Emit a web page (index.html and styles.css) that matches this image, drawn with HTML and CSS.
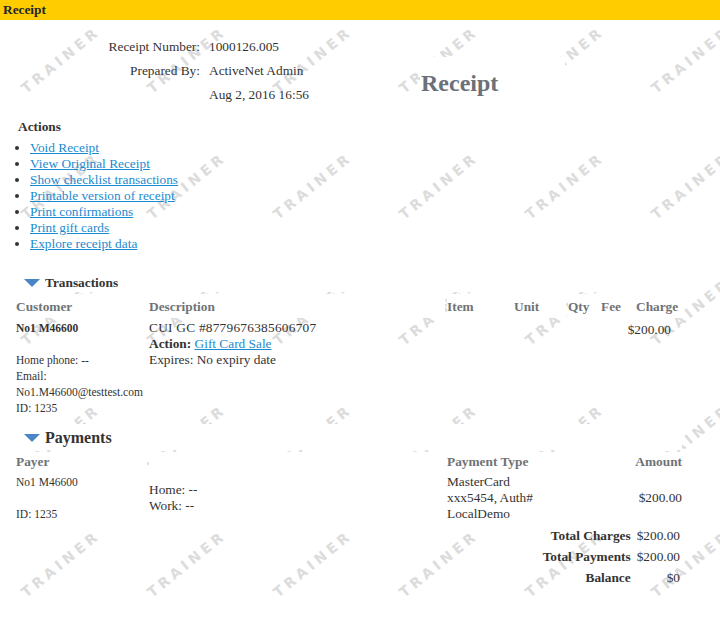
FILE: index.html
```html
<!DOCTYPE html>
<html lang="en">
<head>
<meta charset="utf-8">
<title>Receipt</title>
<link rel="stylesheet" href="styles.css">
</head>
<body>
<div class="page">
  <div class="watermark" aria-hidden="true">
    <span>TRAINER</span><span>TRAINER</span><span>TRAINER</span><span>TRAINER</span><span>TRAINER</span><span>TRAINER</span>
    <span>TRAINER</span><span>TRAINER</span><span>TRAINER</span><span>TRAINER</span><span>TRAINER</span><span>TRAINER</span>
    <span>TRAINER</span><span>TRAINER</span><span>TRAINER</span><span>TRAINER</span><span>TRAINER</span><span>TRAINER</span>
    <span>TRAINER</span><span>TRAINER</span><span>TRAINER</span><span>TRAINER</span><span>TRAINER</span><span>TRAINER</span>
    <span>TRAINER</span><span>TRAINER</span><span>TRAINER</span><span>TRAINER</span><span>TRAINER</span><span>TRAINER</span>
  </div>
  <div class="content">
    <header class="titlebar">Receipt</header>

    <section class="receipt-head">
      <div class="info">
        <div class="label">Receipt Number:</div><div class="value">1000126.005</div>
        <div class="label">Prepared By:</div><div class="value">ActiveNet Admin</div>
        <div class="label"></div><div class="value">Aug 2, 2016 16:56</div>
      </div>
      <h1 class="doc-title">Receipt</h1>
    </section>

    <section class="actions">
      <h3 class="actions-title">Actions</h3>
      <ul class="action-list">
        <li><a href="#">Void Receipt</a></li>
        <li><a href="#">View Original Receipt</a></li>
        <li><a href="#">Show checklist transactions</a></li>
        <li><a href="#">Printable version of receipt</a></li>
        <li><a href="#">Print confirmations</a></li>
        <li><a href="#">Print gift cards</a></li>
        <li><a href="#">Explore receipt data</a></li>
      </ul>
    </section>

    <section class="block">
      <h2 class="section-head"><span class="tri"></span>Transactions</h2>
      <table class="grid tx">
        <colgroup>
          <col class="w-cust"><col class="w-desc"><col class="w-item"><col class="w-unit"><col class="w-qty"><col class="w-fee"><col class="w-charge">
        </colgroup>
        <thead>
          <tr><th>Customer</th><th>Description</th><th>Item</th><th>Unit</th><th>Qty</th><th>Fee</th><th class="charge-th">Charge</th></tr>
        </thead>
        <tbody>
          <tr>
            <td class="cust">
              <div class="name">No1 M46600</div>
              <div class="blank"></div>
              <div>Home phone: --</div>
              <div>Email:</div>
              <div>No1.M46600@testtest.com</div>
              <div>ID: 1235</div>
            </td>
            <td>
              <div class="card-no">CUI GC #8779676385606707</div>
              <div><b>Action:</b> <a href="#">Gift Card Sale</a></div>
              <div>Expires: No expiry date</div>
            </td>
            <td></td><td></td><td></td><td></td>
            <td class="charge">$200.00</td>
          </tr>
        </tbody>
      </table>
    </section>

    <section class="block">
      <h2 class="section-head big"><span class="tri"></span>Payments</h2>
      <table class="grid pay">
        <colgroup>
          <col class="w-cust"><col class="w-desc"><col class="w-type"><col class="w-amount">
        </colgroup>
        <thead>
          <tr><th>Payer</th><th></th><th>Payment Type</th><th class="right">Amount</th></tr>
        </thead>
        <tbody>
          <tr>
            <td class="cust">
              <div>No1 M46600</div>
              <div class="blank"></div>
              <div>ID: 1235</div>
            </td>
            <td class="mid">
              <div>Home: --</div>
              <div>Work: --</div>
            </td>
            <td>MasterCard xxx5454, Auth# LocalDemo</td>
            <td class="mid right">$200.00</td>
          </tr>
        </tbody>
      </table>
    </section>

    <section class="totals">
      <div class="t-label">Total Charges</div><div class="t-value">$200.00</div>
      <div class="t-label">Total Payments</div><div class="t-value">$200.00</div>
      <div class="t-label">Balance</div><div class="t-value">$0</div>
    </section>
  </div>
</div>
</body>
</html>
```

FILE: styles.css
```css
html, body {
  margin: 0;
  padding: 0;
  background: #fff;
}

body {
  font-family: "Liberation Serif", "Times New Roman", serif;
  font-size: 13.33px;
  color: #333;
}

.page {
  position: relative;
  min-height: 629px;
  overflow: hidden;
}

/* Watermark layer */
.watermark {
  position: absolute;
  left: -4px;
  top: -2px;
  display: grid;
  grid-template-columns: repeat(6, 126px);
  grid-auto-rows: 126px;
  pointer-events: none;
}

.watermark span {
  display: flex;
  align-items: center;
  justify-content: center;
  padding-left: 4px;
  font-family: "DejaVu Sans", sans-serif;
  font-weight: bold;
  font-size: 14px;
  letter-spacing: 4px;
  color: #dcdcdc;
  transform: rotate(-39deg);
}

.content {
  position: relative;
}

/* Title bar */
.titlebar {
  height: 20px;
  line-height: 20px;
  padding-left: 3px;
  background: #ffcc00;
  font-weight: bold;
  font-size: 13.33px;
  color: #1d2630;
}

/* Receipt header */
.receipt-head {
  display: flex;
  align-items: flex-start;
  padding-top: 15px;
}

.info {
  display: grid;
  grid-template-columns: 192px 211px;
  grid-auto-rows: 24px;
  column-gap: 9px;
  margin-left: 8px;
  align-items: center;
}

.info .label {
  text-align: right;
}

.doc-title {
  margin: 22px 0 0 0;
  width: 144px;
  padding: 13px 0 3px 1px;
  line-height: 27px;
  background: #fff;
  font-size: 24px;
  font-weight: bold;
  color: #6b7178;
}

/* Actions */
.actions-title {
  margin: 12px 0 0 18px;
  font-size: 13.33px;
  line-height: 16px;
  font-weight: bold;
}

.action-list {
  margin: 5px 0 0 0;
  padding-left: 30px;
  line-height: 16px;
}

a {
  color: #1b8bd0;
  text-decoration: underline;
}

/* Sections */
.section-head {
  box-sizing: border-box;
  width: 668px;
  height: 20px;
  margin: 20px 0 0 14px;
  padding: 2px 0 0 10px;
  line-height: 18px;
  background: #fff;
  font-size: 13.33px;
  font-weight: bold;
  color: #333;
}

.section-head.big {
  height: 26px;
  margin-top: 6px;
  padding-top: 3px;
  padding-bottom: 1px;
  line-height: 22px;
  font-size: 16px;
}

.tri {
  display: inline-block;
  width: 0;
  height: 0;
  border-left: 8px solid transparent;
  border-right: 8px solid transparent;
  border-top: 8px solid #4a86c5;
  margin-right: 5px;
  vertical-align: middle;
  position: relative;
  top: -1px;
}

/* Tables */
.grid {
  border-collapse: separate;
  border-spacing: 2px;
  table-layout: fixed;
  width: 670px;
  margin-left: 14px;
}

.grid th {
  padding: 3px 0 1px;
  line-height: 20px;
  text-align: left;
  vertical-align: top;
  background: #fff;
  color: #6f7377;
  font-weight: bold;
  white-space: nowrap;
}

.grid.pay th {
  padding: 0;
}

.grid td {
  padding: 0;
  line-height: 16px;
  vertical-align: top;
}

.w-cust { width: 131px; }
.w-desc { width: 296px; }
.w-item { width: 65px; }
.w-unit { width: 52px; }
.w-qty { width: 31px; }
.w-fee { width: 17px; }
.w-charge { width: 62px; }
.w-type { width: 110px; }
.w-amount { width: 123px; }

.grid th.charge-th {
  padding-left: 16px;
}

.cust {
  font-size: 11.5px;
}

.cust .name {
  font-weight: bold;
}

.card-no {
  letter-spacing: 0.25px;
}

.blank {
  height: 16px;
}

.grid td.charge {
  text-align: right;
  padding: 2px 11px 0 0;
}

.grid td.mid {
  vertical-align: middle;
}

.grid .right {
  text-align: right;
}

/* Totals */
.totals {
  display: grid;
  grid-template-columns: auto auto;
  justify-content: end;
  column-gap: 6px;
  margin: 1px 40px 0 0;
  line-height: 21px;
}

.t-label {
  text-align: right;
  font-weight: bold;
}

.t-value {
  text-align: right;
}
```
